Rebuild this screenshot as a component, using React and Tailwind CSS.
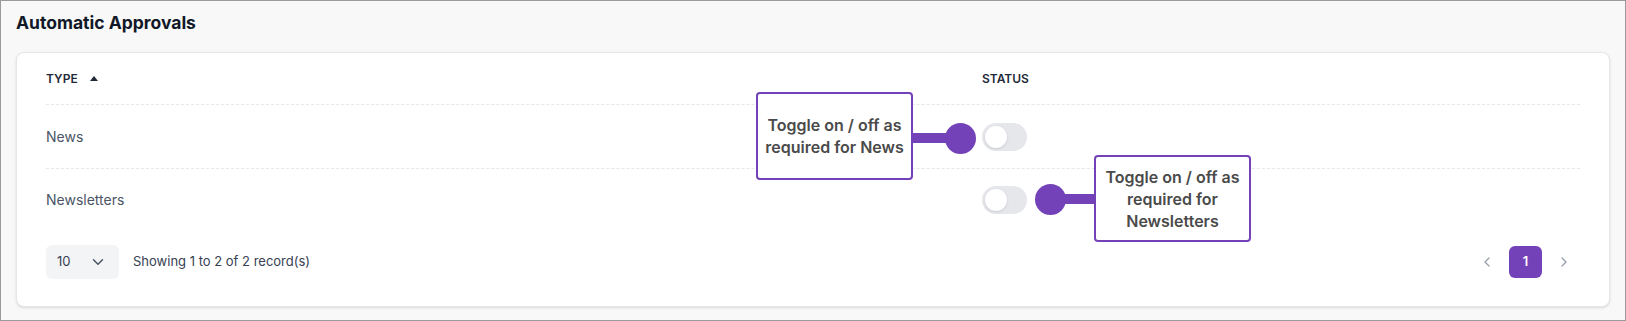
import React, { useState } from "react";
import { ChevronDown, ChevronLeft, ChevronRight } from "lucide-react";

const rows = [
  { id: "news", label: "News" },
  { id: "newsletters", label: "Newsletters" },
];

const Toggle = ({ on, onChange }) => (
  <button
    onClick={onChange}
    className={`flex h-[28px] w-[45px] items-center rounded-full px-[3px] transition-colors ${
      on ? "bg-[#7442b8] justify-end" : "bg-[#e5e7eb] justify-start"
    }`}
  >
    <span className="h-[22px] w-[22px] rounded-full bg-white shadow-sm" />
  </button>
);

const Callout = ({ lines, className }) => (
  <div
    className={`absolute flex flex-col items-center justify-center rounded-[4px] border-2 border-[#7442b8] bg-white text-center text-[16px] font-semibold leading-[22px] text-[#4a4a4a] ${className}`}
  >
    {lines.map((l) => (
      <span key={l}>{l}</span>
    ))}
  </div>
);

export default function App() {
  const [status, setStatus] = useState({ news: false, newsletters: false });

  return (
    <div className="relative h-[321px] w-[1626px] overflow-hidden border border-[#9a9a9a] bg-[#f8f8f8] font-['Inter',sans-serif]">
      <h2 className="px-[15px] pt-[11px] text-[17.5px] font-bold leading-[22px] text-[#111827]">
        Automatic Approvals
      </h2>

      <div className="mx-[15px] mt-[18px] rounded-[8px] border border-[#e5e7eb] bg-white px-[29px] pb-[27px] shadow-sm">
        <div className="flex h-[52px] items-center border-b border-dashed border-[#e5e7eb] text-[12px] font-semibold uppercase text-[#1f2937]">
          <div className="flex w-[936px] items-center gap-[12px]">
            TYPE
            <svg width="8" height="5" viewBox="0 0 8 5">
              <path d="M4 0 L8 5 L0 5 Z" fill="#1f2937" />
            </svg>
          </div>
          <div>STATUS</div>
        </div>

        {rows.map((r, i) => (
          <div
            key={r.id}
            className={`flex items-center text-sm text-gray-600 ${
              i === 0 ? "h-[64px] border-b border-dashed border-[#e5e7eb]" : "h-[62px]"
            }`}
          >
            <div className="w-[936px]">{r.label}</div>
            <Toggle
              on={status[r.id]}
              onChange={() => setStatus((s) => ({ ...s, [r.id]: !s[r.id] }))}
            />
          </div>
        ))}

        <div className="mt-[14px] flex h-[34px] items-center justify-between">
          <div className="flex items-center gap-[14px]">
            <div className="flex h-[34px] w-[73px] items-center justify-between rounded-[6px] bg-[#f3f4f6] pl-[11px] pr-[12px] text-[13px] text-gray-700">
              10
              <ChevronDown size={18} strokeWidth={2} className="text-gray-600" />
            </div>
            <span className="text-[13px] text-gray-700">Showing 1 to 2 of 2 record(s)</span>
          </div>
          <div className="flex items-center gap-[6px]">
            <button className="flex h-[32px] w-[32px] items-center justify-center text-gray-400">
              <ChevronLeft size={16} />
            </button>
            <button className="flex h-[32px] w-[33px] items-center justify-center rounded-[6px] bg-[#7442b8] text-[13px] font-semibold text-white">
              1
            </button>
            <button className="flex h-[32px] w-[32px] items-center justify-center text-gray-400">
              <ChevronRight size={16} />
            </button>
          </div>
        </div>
      </div>

      {/* callout for News */}
      <Callout
        lines={["Toggle on / off as", "required for News"]}
        className="left-[755px] top-[91px] h-[88px] w-[157px]"
      />
      <div className="absolute left-[911px] top-[132px] h-[10px] w-[36px] bg-[#7442b8]" />
      <div className="absolute left-[944px] top-[122px] h-[31px] w-[31px] rounded-full bg-[#7442b8]" />

      {/* callout for Newsletters */}
      <div className="absolute left-[1034px] top-[183px] h-[31px] w-[31px] rounded-full bg-[#7442b8]" />
      <div className="absolute left-[1060px] top-[193px] h-[10px] w-[35px] bg-[#7442b8]" />
      <Callout
        lines={["Toggle on / off as", "required for", "Newsletters"]}
        className="left-[1093px] top-[154px] h-[87px] w-[157px]"
      />
    </div>
  );
}
